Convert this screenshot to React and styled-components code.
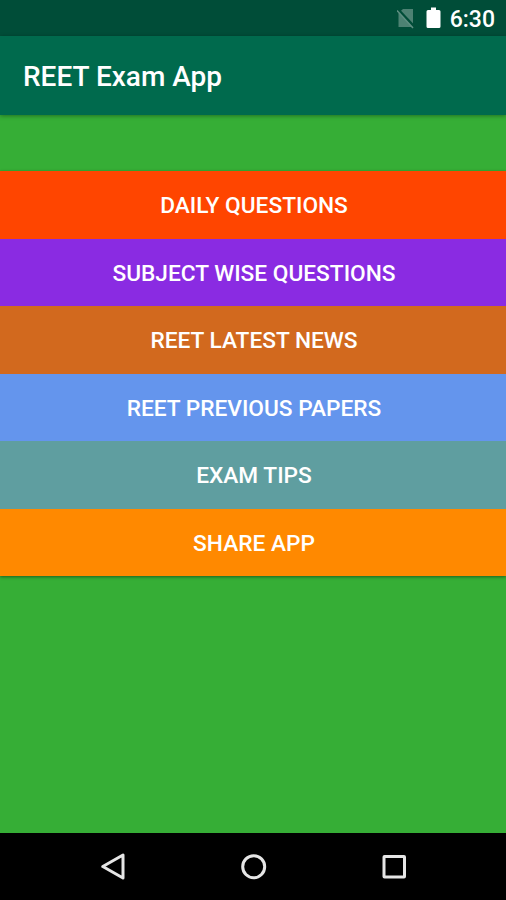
import styled, { createGlobalStyle } from 'styled-components';

const GlobalStyle = createGlobalStyle`
  body {
    margin: 0;
    font-family: Roboto, sans-serif;
    color: white;
  }
`;

const Screen = styled.div`
  display: flex;
  flex-direction: column;
  height: 900px;
  background: #36ae36;
  overflow: hidden;
`;

const StatusBar = styled.div`
  display: flex;
  align-items: center;
  justify-content: flex-end;
  box-sizing: border-box;
  height: 36px;
  padding-right: 11px;
  background: #004d38;
`;

const NoSimIcon = styled.svg`
  width: 19px;
  height: 22px;
  margin-right: 10px;
`;

const BatteryIcon = styled.svg`
  width: 15px;
  height: 22px;
  margin-right: 9px;
`;

const Clock = styled.span`
  font-size: 23px;
  font-weight: 500;
  line-height: 36px;
  padding-top: 3px;
`;

const Header = styled.header`
  display: flex;
  align-items: center;
  box-sizing: border-box;
  height: 78.5px;
  padding-left: 23px;
  background: #006a4d;
  box-shadow: 0 1px 4px rgba(0, 0, 0, 0.35);
`;

const Title = styled.h1`
  margin: 0;
  font-size: 28px;
  font-weight: 500;
  line-height: 36px;
  padding-top: 4px;
`;

const Menu = styled.main`
  display: flex;
  flex-direction: column;
  margin-top: 56.5px;
  box-shadow: 0 1px 3px rgba(0, 0, 0, 0.45);
`;

const MenuButton = styled.button`
  height: 67.5px;
  padding: 1.6px 0 0 2px;
  border: none;
  background: ${({ $color }) => $color};
  color: white;
  font-family: inherit;
  font-size: 22.7px;
  font-weight: 500;
  text-transform: uppercase;
`;

const NavBar = styled.nav`
  display: flex;
  align-items: center;
  justify-content: space-between;
  box-sizing: border-box;
  height: 67px;
  margin-top: auto;
  padding: 0 98px 0 99px;
  background: black;
`;

const NavIcon = styled.svg`
  width: 28px;
  height: 28px;
  fill: none;
  stroke: #e6e6e6;
  stroke-width: 3;
  stroke-linejoin: round;
`;

const items = [
  { label: 'Daily Questions', color: '#ff4500' },
  { label: 'Subject Wise Questions', color: '#8a2be2' },
  { label: 'REET Latest News', color: '#d2691e' },
  { label: 'REET Previous Papers', color: '#6495ed' },
  { label: 'Exam Tips', color: '#5f9ea0' },
  { label: 'Share App', color: '#ff8900' },
];

function App() {
  return (
    <>
      <GlobalStyle />
      <Screen>
        <StatusBar>
          <NoSimIcon viewBox="0 0 19 22">
            <path d="M6 2h10v18H1.5V6z" fill="#4d8273" />
            <path d="M1 2.5L17.5 20" stroke="#004d38" strokeWidth="2.6" />
            <path d="M0 3.5L16 21" stroke="#5f8f82" strokeWidth="1.5" />
          </NoSimIcon>
          <BatteryIcon viewBox="0 0 15 22">
            <path
              d="M5 0.5h5V3h3q1.5 0 1.5 1.5v15q0 1.5-1.5 1.5h-11Q.5 21 .5 19.5v-15Q.5 3 2 3h3z"
              fill="white"
            />
          </BatteryIcon>
          <Clock>6:30</Clock>
        </StatusBar>
        <Header>
          <Title>REET Exam App</Title>
        </Header>
        <Menu>
          {items.map(({ label, color }) => (
            <MenuButton key={label} $color={color}>
              {label}
            </MenuButton>
          ))}
        </Menu>
        <NavBar>
          <NavIcon viewBox="0 0 28 28">
            <path d="M3.8 13.5L24 2v23z" />
          </NavIcon>
          <NavIcon viewBox="0 0 28 28">
            <circle cx="13.7" cy="13.7" r="11" />
          </NavIcon>
          <NavIcon viewBox="0 0 28 28">
            <rect x="4" y="3.5" width="20.5" height="20.5" rx="0.5" />
          </NavIcon>
        </NavBar>
      </Screen>
    </>
  );
}

export default App;
